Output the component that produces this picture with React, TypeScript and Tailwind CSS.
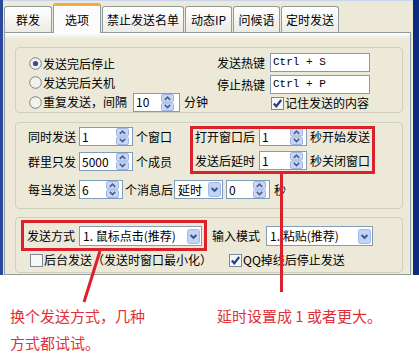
import React from 'react';

const FONT = "font-['Noto_Sans_CJK_SC',sans-serif]";

function Spin() {
  return (
    <svg width="13" height="17" viewBox="0 0 13 17" className="shrink-0">
      <rect x="0.5" y="0.5" width="12" height="7.5" rx="1.5" fill="#c8d7f7" stroke="#9fb5e5" />
      <rect x="0.5" y="9" width="12" height="7.5" rx="1.5" fill="#c8d7f7" stroke="#9fb5e5" />
      <path d="M3.8 5.8 L6.5 3.1 L9.2 5.8" fill="none" stroke="#4d6185" strokeWidth="1.7" />
      <path d="M3.8 10.9 L6.5 13.6 L9.2 10.9" fill="none" stroke="#4d6185" strokeWidth="1.7" />
    </svg>
  );
}

function DropBtn() {
  return (
    <svg width="13" height="15" viewBox="0 0 13 15" className="shrink-0">
      <rect x="0.5" y="0.5" width="12" height="14" rx="2" fill="#c3d3f7" stroke="#a3b9e8" />
      <path d="M3.6 6 L6.5 8.9 L9.4 6" fill="none" stroke="#3e5488" strokeWidth="2" />
    </svg>
  );
}

function Radio({ checked }: { checked?: boolean }) {
  return (
    <svg width="13" height="13" viewBox="0 0 13 13" className="shrink-0">
      <circle cx="6.5" cy="6.5" r="5.8" fill="#f3f2ec" stroke="#75808f" />
      {checked && <circle cx="6.5" cy="6.5" r="2.6" fill="#2f4c9e" />}
    </svg>
  );
}

function Check({ checked }: { checked?: boolean }) {
  return (
    <svg width="13" height="13" viewBox="0 0 13 13" className="shrink-0">
      <rect x="0.5" y="0.5" width="12" height="12" fill="#f7f7f4" stroke="#7d8798" />
      {checked && <path d="M2.8 6.4 L5.3 9.2 L10.2 3" fill="none" stroke="#21408f" strokeWidth="2.2" />}
    </svg>
  );
}

function SpinInput({ value, className }: { value: string; className: string }) {
  return (
    <div className={`flex items-center h-[19px] border border-[#7f9db9] bg-white pr-[3px] ${className}`}>
      <span className="flex-1 pl-[2px] leading-[16px]">{value}</span>
      <Spin />
    </div>
  );
}

function Combo({ value, className }: { value: string; className: string }) {
  return (
    <div className={`flex items-center border border-[#7f9db9] bg-white pr-[1px] ${className}`}>
      <span className="flex-1 whitespace-nowrap pl-[3px] leading-[16px]">{value}</span>
      <DropBtn />
    </div>
  );
}

const tabs = [
  { label: '群发', w: 'w-[48px]' },
  { label: '选项', w: 'w-[48px]', active: true },
  { label: '禁止发送名单', w: 'w-[82px]' },
  { label: '动态IP', w: 'w-[47px]' },
  { label: '问候语', w: 'w-[47px]' },
  { label: '定时发送', w: 'w-[58px]' },
];

export default function App() {
  return (
    <div className={`relative w-[419px] h-[356px] bg-white overflow-hidden text-[12px] text-black ${FONT}`}>
      {/* window */}
      <div className="flex h-[275px]">
        <div className="w-[3px] bg-[#2a489c]" />
        <div className="flex-1 flex flex-col bg-[#ece9d8] pl-[1px] shadow-[inset_0_1px_#c9d5ee]">
          {/* tab strip */}
          <div className="flex items-end gap-[1px] h-[32px]">
            {tabs.map((t) =>
              t.active ? (
                <div
                  key={t.label}
                  className={`relative z-10 -mb-px flex items-center justify-center h-[30px] ${t.w} border border-b-0 border-[#919b9c] border-t-[3px] border-t-[#f2ae3a] rounded-t-[3px] bg-[#fcfcfe]`}
                >
                  {t.label}
                </div>
              ) : (
                <div
                  key={t.label}
                  className={`flex items-center justify-center h-[26px] ${t.w} border border-b-0 border-[#919b9c] rounded-t-[3px] bg-[linear-gradient(#ffffff,#ecebe6)]`}
                >
                  {t.label}
                </div>
              )
            )}
          </div>

          {/* tab page */}
          <div className="flex-1 flex flex-col mr-[2px] border border-[#919b9c] bg-[linear-gradient(#ffffff,#ece9d8_6px)]">
            {/* group 1 */}
            <div className="ml-[10px] mt-[14px] w-[388px] h-[66px] border border-[#d0d0bf] rounded-[4px] flex">
              <div className="w-[201px] pl-[13px] pt-[6px] flex flex-col">
                <div className="flex items-center h-[19px]">
                  <Radio checked />
                  <span className="ml-[1px]">发送完后停止</span>
                </div>
                <div className="flex items-center h-[19px]">
                  <Radio />
                  <span className="ml-[1px]">发送完后关机</span>
                </div>
                <div className="flex items-center h-[20px]">
                  <Radio />
                  <span className="ml-[1px]">重复发送，间隔</span>
                  <SpinInput value="10" className="ml-[6px] w-[47px] pr-[5px]" />
                  <span className="ml-[4px]">分钟</span>
                </div>
              </div>
              <div className="flex flex-col pt-[5px]">
                <div className="flex items-center">
                  <span className="w-[48px] text-right">发送热键</span>
                  <div className="ml-[5px] w-[100px] h-[19px] flex items-center border border-[#7f9db9] bg-white pl-[2px] font-['Liberation_Mono',monospace] text-[11px]">
                    Ctrl + S
                  </div>
                </div>
                <div className="flex items-center mt-[3px]">
                  <span className="w-[48px] text-right">停止热键</span>
                  <div className="ml-[5px] w-[100px] h-[19px] flex items-center border border-[#7f9db9] bg-white pl-[2px] font-['Liberation_Mono',monospace] text-[11px]">
                    Ctrl + P
                  </div>
                </div>
                <div className="flex items-center h-[18px] pl-[54px]">
                  <Check checked />
                  <span className="ml-[1px]">记住发送的内容</span>
                </div>
              </div>
            </div>

            {/* group 2 */}
            <div className="ml-[10px] mt-[9px] w-[388px] h-[87px] border border-[#d0d0bf] rounded-[4px] flex flex-col pt-[4px]">
              <div className="flex">
                <div className="flex flex-col gap-[6px] pl-[12px]">
                  <div className="flex items-center">
                    <span className="w-[48px]">同时发送</span>
                    <SpinInput value="1" className="ml-[3px] w-[54px]" />
                    <span className="ml-[3px] w-[36px]">个窗口</span>
                  </div>
                  <div className="flex items-center">
                    <span className="w-[48px]">群里只发</span>
                    <SpinInput value="5000" className="ml-[3px] w-[54px]" />
                    <span className="ml-[3px] w-[36px]">个成员</span>
                  </div>
                </div>
                <div className="flex flex-col gap-[5px] ml-[23px]">
                  <div className="flex items-center">
                    <span className="w-[60px]">打开窗口后</span>
                    <SpinInput value="1" className="ml-[4px] w-[48px] pr-[2px]" />
                    <span className="ml-[3px]">秒开始发送</span>
                  </div>
                  <div className="flex items-center">
                    <span className="w-[60px]">发送后延时</span>
                    <SpinInput value="1" className="ml-[4px] w-[48px] pr-[2px]" />
                    <span className="ml-[3px]">秒关闭窗口</span>
                  </div>
                </div>
              </div>
              <div className="flex items-center mt-[9px] pl-[12px]">
                <span className="w-[48px]">每当发送</span>
                <SpinInput value="6" className="ml-[3px] w-[44px] pr-[2px]" />
                <span className="ml-[2px] w-[48px]">个消息后</span>
                <Combo value="延时" className="ml-[1px] w-[49px] h-[19px]" />
                <SpinInput value="0" className="ml-[3px] w-[44px] pr-[2px]" />
                <span className="ml-[4px]">秒</span>
              </div>
            </div>

            {/* group 3 */}
            <div className="ml-[10px] mt-[8px] w-[388px] h-[56px] border border-[#d0d0bf] rounded-[4px] flex flex-col pt-[8px]">
              <div className="flex items-center pl-[11px]">
                <span className="w-[48px]">发送方式</span>
                <Combo value="1. 鼠标点击(推荐)" className="ml-[4px] w-[123px] h-[20px]" />
                <span className="ml-[10px] w-[48px]">输入模式</span>
                <Combo value="1. 粘贴(推荐)" className="ml-[6px] w-[107px] h-[20px]" />
              </div>
              <div className="flex items-center h-[16px] mt-[6px] pl-[14px]">
                <div className="flex items-center w-[199px]">
                  <Check />
                  <span className="ml-[1px]">后台发送（发送时窗口最小化）</span>
                </div>
                <Check checked />
                <span className="ml-[1px]">QQ掉线后停止发送</span>
              </div>
            </div>
          </div>
        </div>
        <div className="w-[6px] bg-[#0f2d7e]" />
      </div>

      {/* annotations */}
      <div className="flex pt-[27px] text-[15px] leading-[27px] text-[#e0303a]">
        <div className="ml-[10px] w-[207px]">
          <div>换个发送方式，几种</div>
          <div>方式都试试。</div>
        </div>
        <div>延时设置成 1 或者更大。</div>
      </div>

      {/* callout boxes and leader lines */}
      <svg width="419" height="356" viewBox="0 0 419 356" className="absolute inset-0 pointer-events-none">
        <rect x="191.5" y="127.5" width="182" height="45" fill="none" stroke="#d9222c" strokeWidth="3" />
        <rect x="22.5" y="221.5" width="183" height="28" fill="none" stroke="#d9222c" strokeWidth="3" />
        <line x1="100" y1="251" x2="84" y2="302" stroke="#d9222c" strokeWidth="3" />
        <line x1="281.5" y1="174" x2="281.5" y2="292" stroke="#d9222c" strokeWidth="3" />
      </svg>
    </div>
  );
}
